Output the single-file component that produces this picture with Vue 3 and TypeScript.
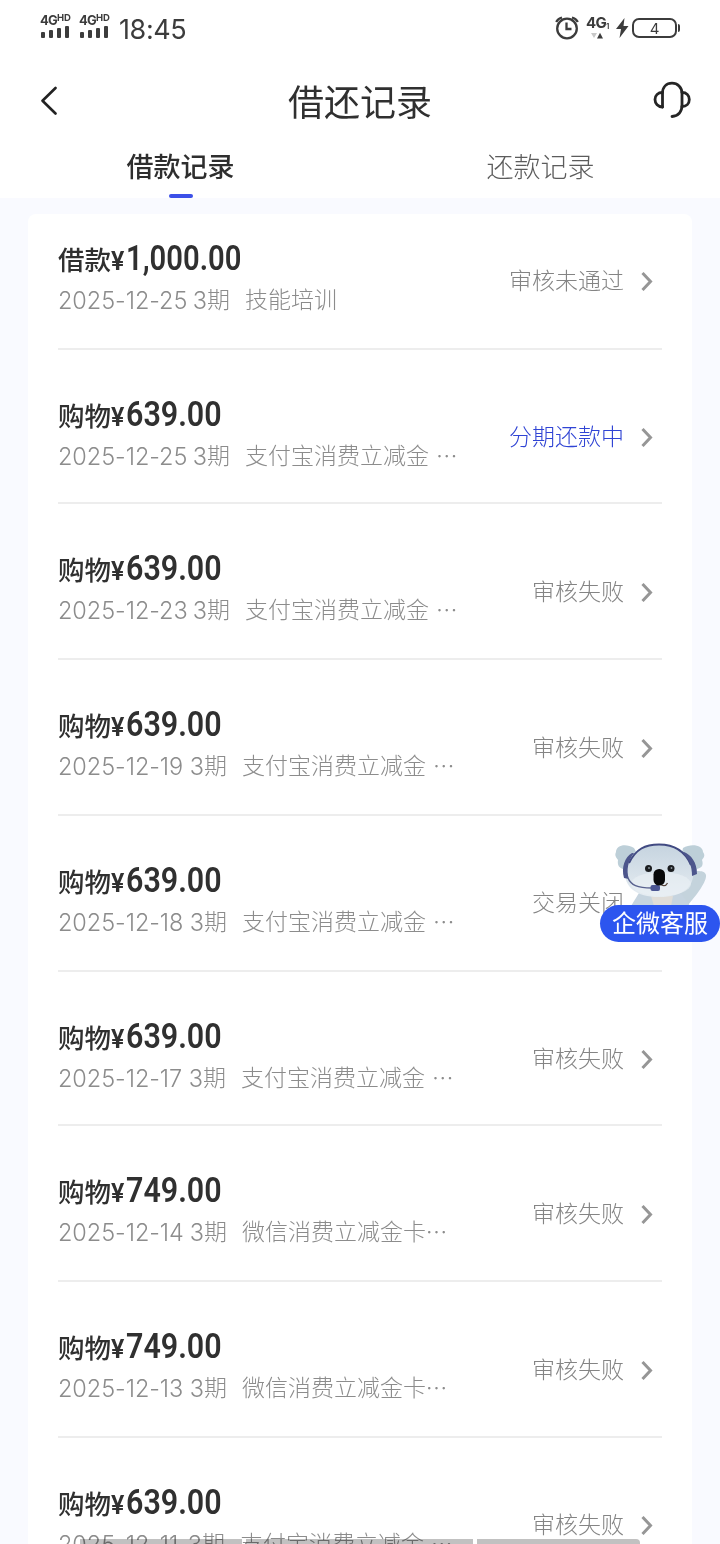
<script setup lang="ts">
interface LoanRecord {
  kind: string
  amount: string
  date: string
  termWidth: number
  purpose: string
  more?: string
  status: string
  active?: boolean
  height: number
  statusOffset: number
}

const gift = '支付宝消费立减金'
const card = '微信消费立减金卡'

const records: LoanRecord[] = [
  { kind: '借款', amount: '1,000.00', date: '2025-12-25', termWidth: 149, purpose: '技能培训', status: '审核未通过', height: 136, statusOffset: 50 },
  { kind: '购物', amount: '639.00', date: '2025-12-25', termWidth: 149, purpose: gift, more: ' ···', status: '分期还款中', active: true, height: 154, statusOffset: 70 },
  { kind: '购物', amount: '639.00', date: '2025-12-23', termWidth: 149, purpose: gift, more: ' ···', status: '审核失败', height: 156, statusOffset: 71 },
  { kind: '购物', amount: '639.00', date: '2025-12-19', termWidth: 146, purpose: gift, more: ' ···', status: '审核失败', height: 156, statusOffset: 71 },
  { kind: '购物', amount: '639.00', date: '2025-12-18', termWidth: 146, purpose: gift, more: ' ···', status: '交易关闭', height: 156, statusOffset: 70 },
  { kind: '购物', amount: '639.00', date: '2025-12-17', termWidth: 145, purpose: gift, more: ' ···', status: '审核失败', height: 154, statusOffset: 70 },
  { kind: '购物', amount: '749.00', date: '2025-12-14', termWidth: 146, purpose: card, more: '···', status: '审核失败', height: 156, statusOffset: 71 },
  { kind: '购物', amount: '749.00', date: '2025-12-13', termWidth: 146, purpose: card, more: '···', status: '审核失败', height: 156, statusOffset: 71 },
  { kind: '购物', amount: '639.00', date: '2025-12-11', termWidth: 144, purpose: gift, more: ' ···', status: '审核失败', height: 156, statusOffset: 70 },
]
</script>

<template>
  <div class="screen">
    <header class="top">
      <div class="statusbar">
        <div class="left">
          <div v-for="n in 2" :key="n" class="signal">
            <div class="net">4G<small>HD</small></div>
            <svg width="30" height="14" viewBox="0 0 30 14" fill="#3c3c3c">
              <rect x="1" y="7" width="4" height="6" rx="1" />
              <rect x="9" y="5" width="4" height="8" rx="1" />
              <rect x="17" y="3" width="4" height="10" rx="1" />
              <rect x="25" y="1" width="4" height="12" rx="1" />
            </svg>
          </div>
          <span class="clock">18:45</span>
        </div>
        <div class="right">
          <svg width="24" height="25" viewBox="0 0 24 25" fill="none" stroke="#3c3c3c" stroke-width="2.3">
            <circle cx="12" cy="13.500" r="9.800" />
            <path d="M11.500 7.500V14h5" />
            <path d="M1.200 7Q3 3.500 7 2.500M22.800 7Q21 3.500 17 2.500" />
          </svg>
          <div class="data">
            <div class="data-net">4G<small>1</small></div>
            <svg width="24" height="7" viewBox="0 0 24 7">
              <path d="M5 1h6L8 6z" fill="#c8c8c8" />
              <path d="M11 6.500h6L14 .8z" fill="#3c3c3c" />
            </svg>
          </div>
          <svg class="bolt" width="13" height="20" viewBox="0 0 13 20" fill="#3c3c3c">
            <path d="M8.500 0 0 11h5L3.500 20 12.500 8H7.500z" />
          </svg>
          <div class="battery">4</div>
          <i class="nub"></i>
        </div>
      </div>

      <div class="nav">
        <svg class="back" width="18" height="30" viewBox="0 0 18 30" fill="none" stroke="#222" stroke-width="2.6" stroke-linecap="round" stroke-linejoin="round">
          <path d="M15.500 3 2.500 15.700 15.500 28.500" />
        </svg>
        <h1>借还记录</h1>
        <svg class="headset" width="38" height="38" viewBox="0 0 38 38" fill="none" stroke="#252525" stroke-width="2.8" stroke-linecap="round" stroke-linejoin="round">
          <path d="M9.500 26V12.500C9.500 6 13.500 2.200 19 2.200S29 6 29 12.500V24c0 7-4 11-10 11.500" />
          <path d="M9.500 11.500C5 11.500 2 14.500 2 18.500S5 26 9.500 26" />
          <path d="M29 11.500c4.500 0 7.300 3 7.300 7S33.500 25.500 29 25.500" />
        </svg>
      </div>

      <nav class="tabs">
        <div class="tab on">借款记录</div>
        <div class="tab">还款记录</div>
      </nav>
    </header>

    <main class="card">
      <section v-for="(r, i) in records" :key="i" class="row" :class="{ first: i === 0 }" :style="{ height: r.height + 'px' }">
        <div class="info">
          <div class="title">
            <span class="kind">{{ r.kind }}</span>
            <span class="yen">¥</span>
            <span class="amount">{{ r.amount }}</span>
          </div>
          <div class="detail">
            <span class="date" :style="{ width: r.termWidth + 'px' }"><span>{{ r.date }}</span><span>3</span></span>
            <span class="term">期</span>
            <span>{{ r.purpose }}</span>
            <span v-if="r.more" class="more">{{ r.more }}</span>
          </div>
        </div>
        <div class="state" :class="{ active: r.active }" :style="{ marginTop: r.statusOffset + 'px' }">
          <span>{{ r.status }}</span>
          <svg width="12" height="20" viewBox="0 0 12 20" fill="none" stroke="#969696" stroke-width="3">
            <path d="M1.500 2 9.500 10.500 1.500 19" />
          </svg>
        </div>
      </section>
    </main>

    <aside class="service">
      <svg width="100" height="66" viewBox="0 0 100 66">
        <defs>
          <linearGradient id="face" x1="0" y1="0" x2="0" y2="1">
            <stop offset="0" stop-color="#c5d3df" />
            <stop offset="1" stop-color="#e6edf2" />
          </linearGradient>
        </defs>
        <path d="M82 31c5 0 12-1 13 4 1 6-9 20-19 31H62z" fill="#c4d3dc" />
        <path d="M23 8C15 3 5 5 5 12c-2 4 1 6 2 8-1 6 2 8 5 9 1 5 6 7 10 4l6-16z" fill="#bdcfd8" />
        <path d="M72 8c8-5 20-3 20 4 3 4 0 6-1 8 2 6-1 8-5 9-1 5-6 7-10 4l-6-16z" fill="#bdcfd8" />
        <path d="M28 53h42l9 13H20z" fill="#c6d4df" />
        <path d="M40 56h22l-2 10H43z" fill="#e0ddd8" />
        <path d="M48 4c20 0 31 12 34 27 2 16-11 26-34 26S13 47 14 31C17 14 29 4 48 4z" fill="url(#face)" />
        <ellipse cx="50" cy="44" rx="30" ry="12" fill="#eaf0f4" opacity=".65" />
        <path d="M18 23C25 9 34 4.500 48 4.500S74 11 80 25" fill="none" stroke="#414a82" stroke-width="2" />
        <path d="M21 13c-7 4-11 14-8 25l5 1c-3-9-1-18 5-26zM73 12c7 3 13 10 13 22l-5 2c0-10-3-17-9-23z" fill="#4d568c" />
        <path d="M17 38c3 7 9 10 24 10" fill="none" stroke="#59628f" stroke-width="1.500" />
        <rect x="39.500" y="45" width="9.500" height="6" rx="2" fill="#4b5693" />
        <circle cx="37.500" cy="28.500" r="3.500" fill="#1b1d20" />
        <circle cx="60" cy="28.500" r="3.500" fill="#1b1d20" />
        <circle cx="38" cy="28" r=".9" fill="#8d999f" />
        <circle cx="60.500" cy="28" r=".9" fill="#8d999f" />
        <rect x="42.500" y="29" width="11.500" height="16.500" rx="5.500" fill="#08090a" />
        <path d="M50.500 45q4 2 6-2" fill="none" stroke="#55443c" stroke-width="1.300" />
      </svg>
      <div class="pill">企微客服</div>
    </aside>

    <div class="homebar"><i></i><i></i><i></i></div>
  </div>
</template>

<style>
body {
  margin: 0;
  background: #f9faff;
}
</style>

<style scoped>
.screen {
  position: relative;
  width: 720px;
  height: 1544px;
  overflow: hidden;
  background: #f9faff;
  font-family: Inter, "Noto Sans CJK SC", sans-serif;
  color: #303030;
}
.top {
  height: 198px;
  background: #fff;
}
.statusbar {
  display: flex;
  justify-content: space-between;
  height: 56px;
  box-sizing: border-box;
  padding: 14px 40px 0;
  color: #3c3c3c;
}
.left,
.right {
  display: flex;
  align-items: flex-start;
}
.signal {
  width: 39px;
}
.net {
  display: flex;
  height: 11px;
  font-size: 13px;
  line-height: 13px;
  font-weight: 700;
  letter-spacing: -0.8px;
}
.net small {
  font-size: 9.5px;
  line-height: 8px;
  letter-spacing: 0;
}
.signal svg {
  display: block;
}
.clock {
  margin-left: 1px;
  font-size: 27px;
  line-height: 32px;
  letter-spacing: -0.4px;
}
.right svg {
  display: block;
}
.right > svg:first-child {
  margin: 1px 7px 0 0;
}
.data {
  width: 30px;
}
.data-net {
  display: flex;
  align-items: flex-end;
  height: 18px;
  font-size: 15px;
  line-height: 18px;
  font-weight: 700;
  letter-spacing: -0.6px;
}
.data-net small {
  font-size: 7px;
  line-height: 11px;
}
.right .bolt {
  margin: 4px 3px 0 0;
}
.battery {
  width: 45px;
  height: 20px;
  margin-top: 4px;
  box-sizing: border-box;
  border: 2px solid #3c3c3c;
  border-radius: 7px;
  text-align: center;
  font-size: 15px;
  line-height: 17px;
}
.nub {
  width: 2px;
  height: 8px;
  margin: 10px 0 0 1px;
  border-radius: 0 2px 2px 0;
  background: #3c3c3c;
}
.nav {
  display: flex;
  align-items: center;
  justify-content: space-between;
  height: 88px;
  padding: 0 29px 0 40px;
}
h1 {
  margin: 5px 0 0 9px;
  font-size: 36px;
  line-height: 48px;
  font-weight: 400;
}
.tabs {
  display: flex;
  height: 54px;
}
.tab {
  display: flex;
  flex-direction: column;
  align-items: center;
  box-sizing: border-box;
  width: 50%;
  padding: 1px 0 0 1px;
  font-size: 27px;
  line-height: 46px;
  color: #5c5c5c;
  font-weight: 300;
}
.tab.on {
  color: #2e2e2e;
  font-weight: 500;
}
.tab.on::after {
  content: "";
  width: 24px;
  height: 4px;
  margin-top: 3px;
  border-radius: 2px;
  background: #3c50e8;
}
.card {
  width: 604px;
  margin: 16px 28px 0;
  padding: 0 30px;
  border-radius: 8px;
  background: #fff;
}
.row {
  display: flex;
  justify-content: space-between;
  align-items: flex-start;
  box-sizing: border-box;
  border-bottom: 2px solid #ededed;
}
.info {
  margin-top: 44px;
}
.first .info {
  margin-top: 24px;
}
.title {
  display: flex;
  align-items: baseline;
  height: 42px;
  line-height: 42px;
  white-space: nowrap;
}
.kind {
  font-size: 26.5px;
  font-weight: 500;
}
.yen {
  width: 14.5px;
  font-family: Roboto, sans-serif;
  font-size: 25px;
  font-weight: 600;
}
.amount {
  font-family: Roboto, sans-serif;
  font-size: 35px;
  font-weight: 600;
  transform: scaleX(0.87);
  transform-origin: left;
}
.first .amount {
  transform: scaleX(0.835);
}
.detail {
  display: flex;
  height: 40px;
  font-size: 23px;
  line-height: 40px;
  font-weight: 300;
  color: #8c8c8c;
  white-space: pre;
}
.date {
  display: flex;
  justify-content: space-between;
  font-size: 23.5px;
  line-height: 41px;
  letter-spacing: -0.05px;
}
.term {
  margin-right: 15px;
}
.more {
  letter-spacing: 0.8px;
}
.state {
  display: flex;
  align-items: center;
  gap: 17px;
  height: 34px;
  margin-right: 9px;
  font-size: 23px;
  line-height: 34px;
  font-weight: 300;
  color: #848484;
}
.state.active span {
  color: #3044d4;
}
.service {
  position: absolute;
  top: 840px;
  left: 600px;
  width: 120px;
  height: 102px;
}
.service svg {
  display: block;
  margin-left: 11px;
}
.pill {
  position: relative;
  height: 37px;
  margin-top: -1px;
  border-radius: 19px;
  background: #2c55ef;
  color: #fff;
  text-align: center;
  font-size: 24px;
  line-height: 38px;
}
.homebar {
  position: absolute;
  left: 80px;
  bottom: 0;
  display: flex;
  gap: 4px;
}
.homebar i {
  width: 162px;
  height: 5px;
  background: #c1c1c1;
  mix-blend-mode: multiply;
}
.homebar i:nth-child(2) {
  width: 227px;
}
.homebar i:nth-child(3) {
  width: 163px;
  border-radius: 0 4px 0 0;
}
</style>
